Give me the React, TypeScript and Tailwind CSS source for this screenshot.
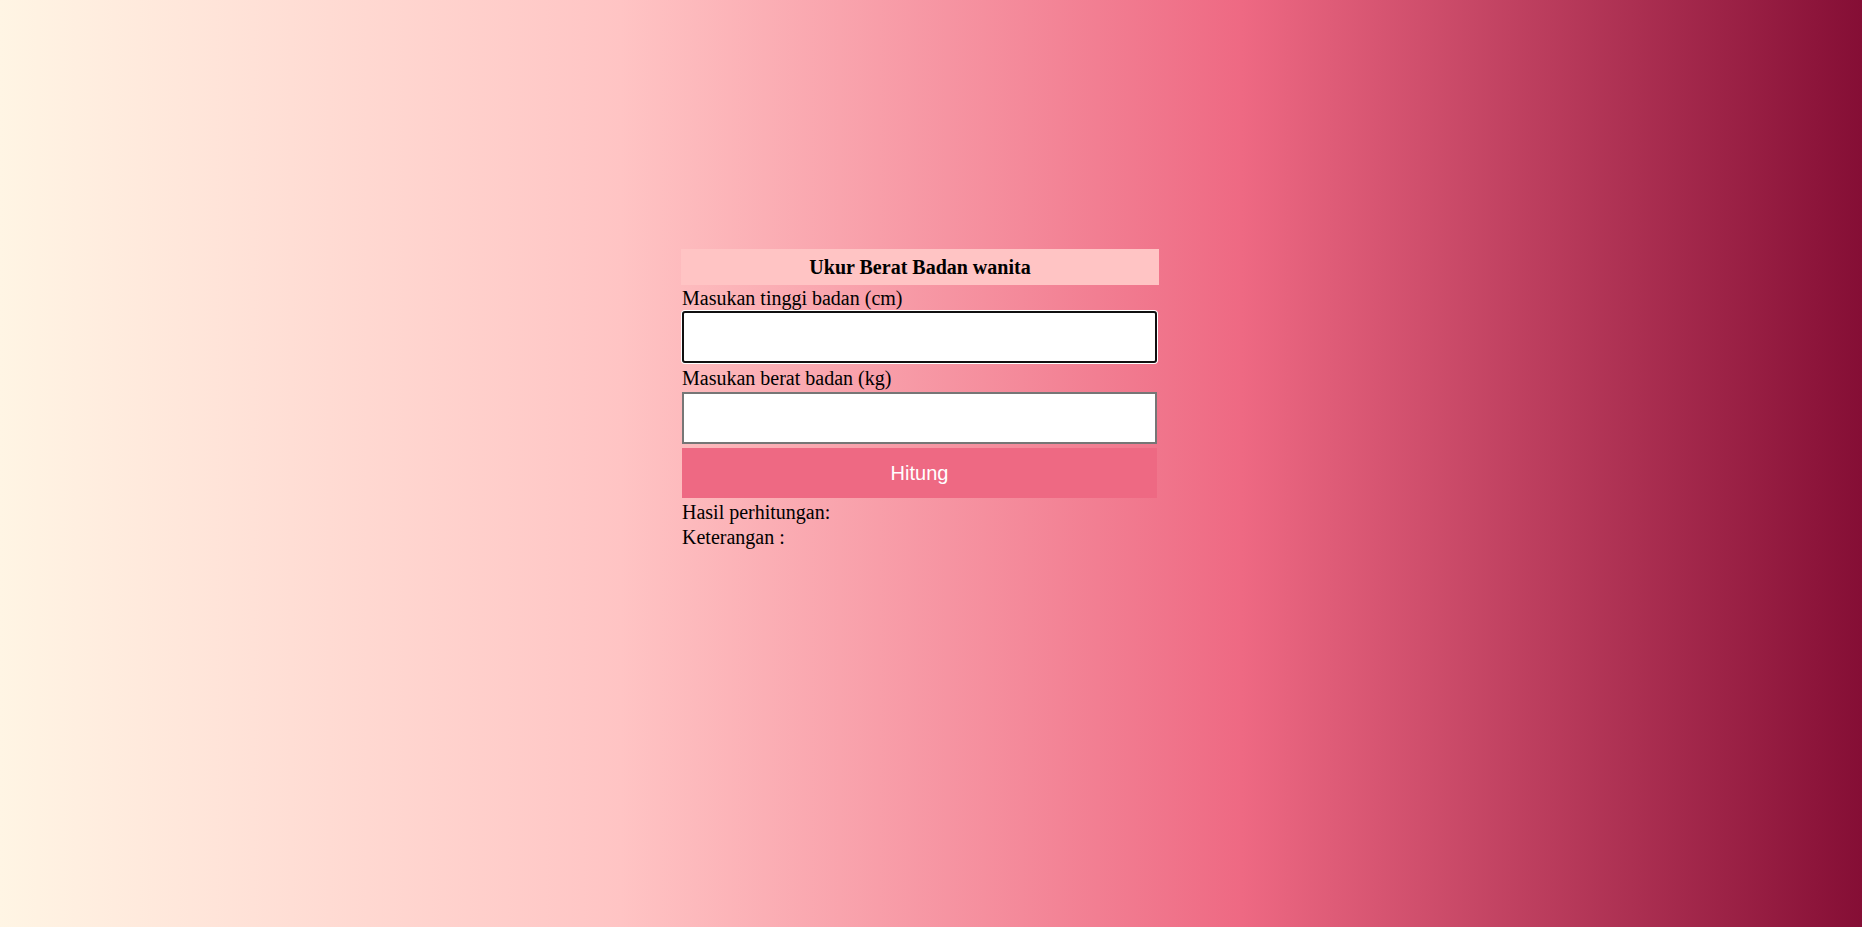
import React from "react";

export default function App() {
  return (
    <div
      className="w-full h-[927px] overflow-hidden bg-[linear-gradient(to_right,#fff5e4,#ffc4c4,#ee6983,#850e35)]"
      style={{ fontFamily: '"Liberation Serif", "Times New Roman", serif' }}
    >
      <div className="pt-[249px] pl-[681px]">
        <div className="w-[478px] flex flex-col text-[20px] text-black">
          <div className="h-[36px] bg-[#ffc4c4] flex items-center justify-center font-bold leading-[36px]">
            Ukur Berat Badan wanita
          </div>
          <div className="px-[1px]">
            <div className="h-[26px] leading-[26px]">Masukan tinggi badan (cm)</div>
            <input
              type="text"
              className="block w-[475px] h-[52px] bg-white border-2 border-[#101010] rounded-[3px] shadow-[0_0_0_1px_#ffffff] outline-none"
            />
            <div className="h-[28px] leading-[28px] mt-[1px]">Masukan berat badan (kg)</div>
            <input
              type="text"
              className="block w-[475px] h-[52px] bg-white border-2 border-[#767676] outline-none"
            />
            <button
              className="mt-[4px] block w-[475px] h-[50px] bg-[#ee6983] text-white text-[20px]"
              style={{ fontFamily: '"Liberation Sans", Arial, sans-serif' }}
            >
              Hitung
            </button>
            <div className="mt-[2px] h-[25px] leading-[25px]">Hasil perhitungan:</div>
            <div className="h-[25px] leading-[25px]">Keterangan :</div>
          </div>
        </div>
      </div>
    </div>
  );
}
